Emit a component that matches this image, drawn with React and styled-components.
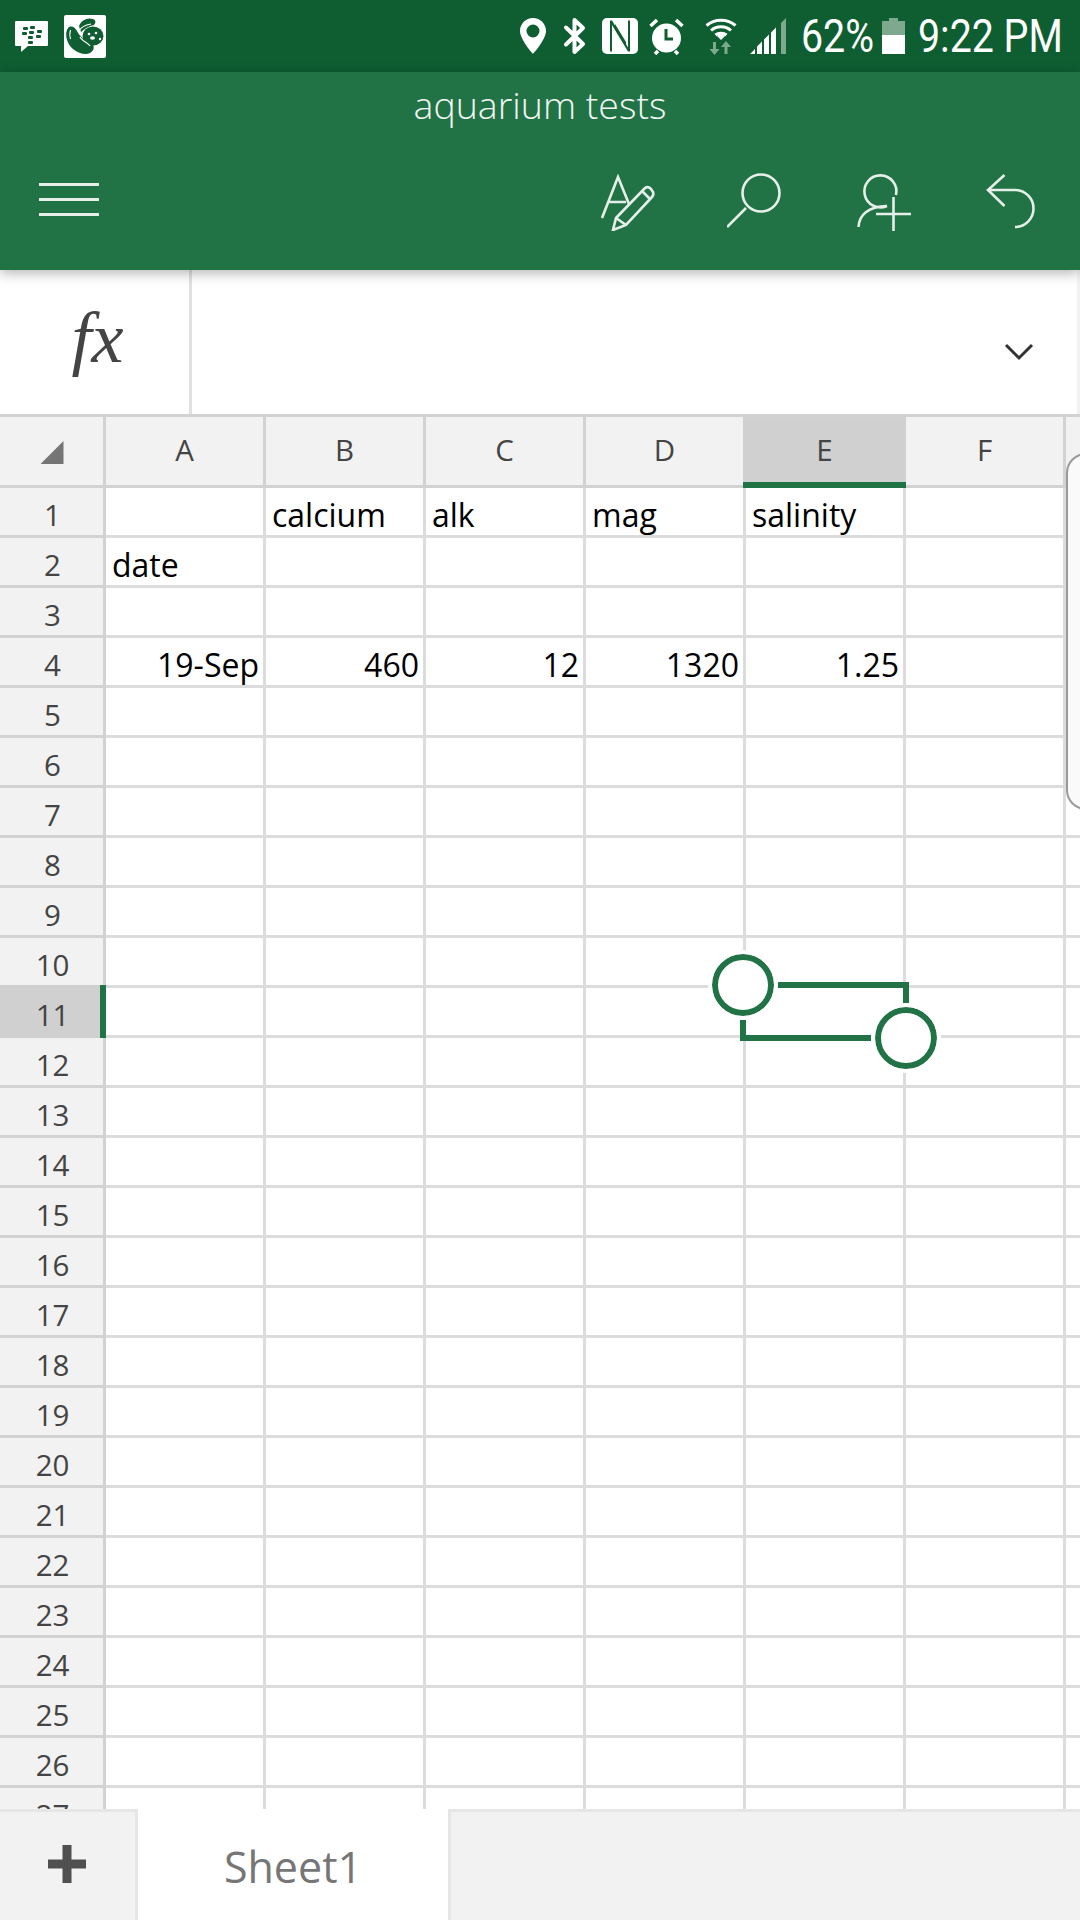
import React from 'react';
import styled, { createGlobalStyle } from 'styled-components';

const GREEN = '#217346';
const STATUS_GREEN = '#0f5e32';
const ICON = '#e6efe9';
const COLUMNS = ['A', 'B', 'C', 'D', 'E', 'F'];
const ROW_COUNT = 27;

const CELLS = {
  '1-B': { text: 'calcium' },
  '1-C': { text: 'alk' },
  '1-D': { text: 'mag' },
  '1-E': { text: 'salinity' },
  '2-A': { text: 'date' },
  '4-A': { text: '19-Sep', right: true },
  '4-B': { text: '460', right: true },
  '4-C': { text: '12', right: true },
  '4-D': { text: '1320', right: true },
  '4-E': { text: '1.25', right: true },
};

const GlobalStyle = createGlobalStyle`
  html, body {
    margin: 0;
    padding: 0;
    background: #fff;
  }
`;

const Screen = styled.div`
  width: 1080px;
  height: 1920px;
  display: flex;
  flex-direction: column;
  overflow: hidden;
  font-family: "Open Sans", "Noto Sans", sans-serif;
`;

const StatusBar = styled.div`
  height: 72px;
  flex: none;
  display: flex;
  align-items: center;
  justify-content: space-between;
  padding: 0 18px 0 15px;
  background: ${STATUS_GREEN};
  color: #fff;
`;

const StatusGroup = styled.div`
  display: flex;
  align-items: center;
`;

const StatusIcon = styled.svg`
  display: block;
  flex: none;
  margin-left: ${(props) => props.$gap || 0}px;
`;

// no condensed face is installed, so the status text is narrowed by hand
const StatusText = styled.span`
  display: block;
  flex: none;
  width: ${(props) => props.$width}px;
  margin-left: ${(props) => props.$gap || 0}px;
  font-family: "Roboto", sans-serif;
  font-size: 46px;
  line-height: 46px;
  white-space: nowrap;
  transform: scaleX(0.855);
  transform-origin: left center;
`;

const AppBar = styled.header`
  height: 198px;
  flex: none;
  position: relative;
  z-index: 2;
  background: ${GREEN};
  color: #fff;
  box-shadow: 0 3px 12px rgba(0, 0, 0, 0.3);
`;

const Title = styled.div`
  height: 64px;
  display: flex;
  align-items: center;
  justify-content: center;
  font-size: 37.5px;
  font-weight: 300;
  color: #f3f7f4;
`;

const Toolbar = styled.div`
  display: flex;
  align-items: center;
  height: 60px;
  margin-top: 35px;
  padding: 0 6px 0 39px;
`;

const Hamburger = styled.div`
  width: 60px;
  height: 33px;
  margin: 0 auto 3px 0;
  display: flex;
  flex-direction: column;
  justify-content: space-between;
  & > span {
    display: block;
    height: 3px;
    background: ${ICON};
  }
`;

const ToolButton = styled.button`
  width: 127px;
  height: 60px;
  padding: 0;
  border: 0;
  background: none;
  display: flex;
  align-items: center;
  justify-content: center;
`;

const FormulaBar = styled.div`
  height: 144px;
  flex: none;
  display: flex;
  background: #fff;
`;

const FxBox = styled.div`
  width: 192px;
  flex: none;
  box-sizing: border-box;
  display: flex;
  align-items: center;
  justify-content: center;
  padding: 0 0 8px 6px;
  border-right: 3px solid #e1e1e1;
  font-family: "Liberation Serif", serif;
  font-style: italic;
  font-size: 72px;
  color: #444;
`;

const FormulaInput = styled.div`
  flex: 1;
  display: flex;
  align-items: center;
  justify-content: flex-end;
  padding: 20px 43px 0 0;
  border-right: 3px solid #f2f2f2;
`;

const Sheet = styled.div`
  flex: 1;
  position: relative;
  overflow: hidden;
  background: #fff;
  border-top: 3px solid #d2d2d2;
`;

const Row = styled.div`
  display: grid;
  grid-template-columns: 106px repeat(6, 160px) 1fr;
  grid-template-rows: minmax(0, 1fr);
  height: ${(props) => (props.$header ? 71 : 50)}px;
`;

const HeadCell = styled.div`
  position: relative;
  box-sizing: border-box;
  display: flex;
  align-items: center;
  justify-content: center;
  padding-bottom: ${(props) => (props.$column ? 2 : 0)}px;
  padding-top: ${(props) => (props.$column ? 0 : 7)}px;
  padding-left: ${(props) => (props.$column ? 0 : 2)}px;
  background: #f2f2f2;
  border-right: 3px solid #d2d2d2;
  border-bottom: 3px solid #d2d2d2;
  color: #444;
  font-size: 29.5px;
  line-height: 34px;
  & > span {
    position: relative;
  }
`;

const SelectedColumnShade = styled.div`
  position: absolute;
  left: -3px;
  right: -3px;
  top: -3px;
  bottom: -3px;
  background: #d0d0d0;
  border-bottom: 6px solid ${GREEN};
`;

const SelectedRowShade = styled.div`
  position: absolute;
  left: 0;
  right: -3px;
  top: -3px;
  bottom: -3px;
  box-sizing: border-box;
  background: #d0d0d0;
  border-right: 6px solid ${GREEN};
`;

const Cell = styled.div`
  box-sizing: border-box;
  display: flex;
  align-items: center;
  justify-content: ${(props) => (props.$right ? 'flex-end' : 'flex-start')};
  padding: 7px 4px 0 ${(props) => (props.$right ? 2 : 6)}px;
  border-right: 3px solid #dcdcdc;
  border-bottom: 3px solid #dcdcdc;
  color: #000;
  font-size: 32px;
  line-height: 38px;
  white-space: nowrap;
`;

const RowEnd = styled.div`
  background: ${(props) => (props.$header ? '#f2f2f2' : '#fff')};
  border-bottom: 3px solid ${(props) => (props.$header ? 'transparent' : '#dcdcdc')};
`;

const CornerMark = styled.div`
  width: 23px;
  height: 23px;
  margin: 5px 0 0 1px;
  background: #757575;
  clip-path: polygon(100% 0, 100% 100%, 0 100%);
`;

const ScrollThumb = styled.div`
  position: absolute;
  left: 1066px;
  top: 36px;
  width: 40px;
  height: 357px;
  box-sizing: border-box;
  background: #fafafa;
  border: 2px solid #999;
  border-radius: 20px;
`;

const SelectionMarks = styled.svg`
  position: absolute;
  left: 700px;
  top: 527px;
`;

const TabBar = styled.footer`
  height: 111px;
  flex: none;
  position: relative;
  z-index: 1;
  display: flex;
  background: #f2f2f2;
`;

const AddTab = styled.div`
  width: 138px;
  flex: none;
  display: flex;
  align-items: center;
  justify-content: center;
  padding: 0 1px 5px 0;
  box-sizing: border-box;
  border-top: 3px solid #e6e6e6;
  border-right: 3px solid #e6e6e6;
`;

const ActiveTab = styled.div`
  width: 313px;
  flex: none;
  box-sizing: border-box;
  display: flex;
  align-items: center;
  justify-content: center;
  background: #fff;
  border-right: 3px solid #e6e6e6;
  color: #767676;
  font-size: 43px;
  padding-top: 4px;
`;

const TabRest = styled.div`
  flex: 1;
  border-top: 3px solid #e6e6e6;
`;

function PinIcon({ gap }) {
  return (
    <StatusIcon $gap={gap} width="26" height="36" viewBox="0 0 26 36">
      <path
        fill="#fff"
        fillRule="evenodd"
        d="M13 0C5.800 0 0 5.800 0 13c0 8.500 13 23 13 23s13-14.500 13-23C26 5.800 20.200 0 13 0zm0 6.500a6.500 6.500 0 1 1 0 13 6.500 6.500 0 0 1 0-13z"
      />
    </StatusIcon>
  );
}

function BluetoothIcon({ gap }) {
  return (
    <StatusIcon $gap={gap} width="24" height="38" viewBox="0 0 24 38">
      <path d="M3 10.500L20 27l-8.500 8V3L20 11 3 27.500" fill="none" stroke="#fff" strokeWidth="4" strokeLinejoin="round" strokeLinecap="round" />
    </StatusIcon>
  );
}

function NfcIcon({ gap }) {
  return (
    <StatusIcon $gap={gap} width="36" height="36" viewBox="0 0 36 36">
      <rect width="36" height="36" rx="5" fill="#fff" />
      <path d="M8 2.500v31h2V7l16 26.500h2V2.500h-2v27L10 2.500z" fill={STATUS_GREEN} />
      <path d="M13 11l11 18V24L13 6z" fill={STATUS_GREEN} />
    </StatusIcon>
  );
}

function AlarmIcon({ gap }) {
  return (
    <StatusIcon $gap={gap} width="35" height="37" viewBox="0 0 35 37">
      <circle cx="17.500" cy="20" r="14.500" fill="#fff" />
      <path d="M17 11v10h7" fill="none" stroke={STATUS_GREEN} strokeWidth="3" />
      <path d="M1.500 8L8 2M33.500 8L27 2M6 36l3-3M29 36l-3-3" stroke="#fff" strokeWidth="3.500" />
    </StatusIcon>
  );
}

function WifiIcon({ gap }) {
  return (
    <StatusIcon $gap={gap} width="32" height="37" viewBox="0 0 32 37">
      <g fill="none" stroke="#fff" strokeWidth="3">
        <path d="M1.500 7.500C9.500 0.500 22.500 0.500 30.500 7.500" />
        <path d="M6 12.500C11.500 7.500 20.500 7.500 26 12.500" />
        <path d="M10.500 17C13.500 14.500 18.500 14.500 21.500 17" />
      </g>
      <path d="M16 22l-4-4c2-2 6-2 8 0z" fill="#fff" />
      <path d="M8 24h3v7h3.500L9.500 37l-5-6H8zM21 23l5 6h-3.500v7h-3v-7H16z" fill="#7fa98f" />
    </StatusIcon>
  );
}

function SignalIcon({ gap }) {
  return (
    <StatusIcon $gap={gap} width="36" height="36" viewBox="0 0 36 36">
      <path d="M0 36l5-5v5zM7 36V28.500l5-5V36zM14 36V21.500l5-5V36zM21 36V14.500l5-5V36z" fill="#fff" />
      <path d="M31 36V5l5-5v36z" fill="#7fa98f" />
    </StatusIcon>
  );
}

function BatteryIcon({ gap }) {
  return (
    <StatusIcon $gap={gap} width="23" height="36" viewBox="0 0 23 36">
      <path d="M0 3h7V0h9v3h7v14H0z" fill="#7fa98f" />
      <rect y="17" width="23" height="19" fill="#fff" />
    </StatusIcon>
  );
}

function BbmIcon() {
  return (
    <StatusIcon width="33" height="31" viewBox="0 0 33 31">
      <path d="M1 0h31a1 1 0 0 1 1 1v23a1 1 0 0 1-1 1H13l-7 6v-6H1a1 1 0 0 1-1-1V1a1 1 0 0 1 1-1z" fill="#fff" />
      <g fill={STATUS_GREEN}>
        <rect x="8" y="6" width="5" height="3" rx="1" />
        <rect x="15" y="5" width="5" height="3" rx="1" />
        <rect x="7" y="11" width="5" height="3" rx="1" />
        <rect x="14" y="10" width="5" height="3" rx="1" />
        <rect x="22" y="9" width="5" height="3" rx="1" />
        <rect x="13" y="15" width="5" height="3" rx="1" />
        <rect x="21" y="14" width="5" height="3" rx="1" />
        <rect x="13" y="20" width="5" height="3" rx="1" />
      </g>
    </StatusIcon>
  );
}

function BeanIcon({ gap }) {
  return (
    <StatusIcon $gap={gap} width="42" height="43" viewBox="0 0 42 43">
      <rect width="42" height="43" rx="2" fill="#fff" />
      <g fill={STATUS_GREEN}>
        <path d="M15 11c2-6 9-9 14-7 3 1 3 4 1 6-5 1-10 4-13 7z" />
        <ellipse cx="29" cy="21" rx="10.500" ry="9.500" />
        <path d="M4 13c3-3 7-1 9 3 3 6 9 10 15 13 3 2 2 7-2 9-4 2-11 1-17-4C3 29 0 19 4 13z" />
      </g>
      <path d="M6.500 15c-1 3-1 6 0 9" fill="none" stroke="#fff" strokeWidth="1.200" />
      <path d="M15 16c2-4 6-6 12-7M26 31c-2-3-8-5-10-9" fill="none" stroke="#fff" strokeWidth="1.200" />
      <g fill="#fff">
        <circle cx="25" cy="19" r="1.300" />
        <circle cx="32" cy="18" r="1.300" />
        <ellipse cx="28.500" cy="23" rx="2.500" ry="1.800" />
        <circle cx="36" cy="24" r="1.200" />
      </g>
    </StatusIcon>
  );
}

const toolStroke = { fill: 'none', stroke: ICON, strokeWidth: 2.6 };

function EditIcon() {
  return (
    <svg width="60" height="60" viewBox="2 0 60 60" {...toolStroke}>
      <path d="M4 47L20 6l11 27M11 31h17" />
      <path d="M15 59l3-12 29-30q3-2 6 1l2 3q1 3-1 5L28 54zM18 47l10 7M44 20l8 8" />
    </svg>
  );
}

function SearchIcon() {
  return (
    <svg width="60" height="60" viewBox="4 0 60 60" {...toolStroke}>
      <circle cx="38" cy="22" r="18.500" />
      <path d="M23 37L4 56" />
    </svg>
  );
}

function AddPersonIcon() {
  return (
    <svg width="60" height="60" viewBox="0 0 60 60" {...toolStroke}>
      <path d="M42 24A16 16 0 1 0 33 35M4.500 56C5 44 14 35.500 33 35M22 43h35M39.500 26v34" />
    </svg>
  );
}

function UndoIcon() {
  return (
    <svg width="60" height="60" viewBox="0 0 60 60" {...toolStroke}>
      <path d="M23.500 4L7 19l16.500 16M7 19h27a18.500 18.500 0 0 1 0 37" />
    </svg>
  );
}

function ColumnHeaders() {
  return (
    <Row $header>
      <HeadCell $column>
        <CornerMark />
      </HeadCell>
      {COLUMNS.map((name) => (
        <HeadCell $column key={name}>
          {name === 'E' && <SelectedColumnShade />}
          <span>{name}</span>
        </HeadCell>
      ))}
      <RowEnd $header />
    </Row>
  );
}

function SheetRow({ number }) {
  return (
    <Row>
      <HeadCell>
        {number === 11 && <SelectedRowShade />}
        <span>{number}</span>
      </HeadCell>
      {COLUMNS.map((name) => {
        const cell = CELLS[`${number}-${name}`];
        return (
          <Cell key={name} $right={cell && cell.right}>
            {cell && cell.text}
          </Cell>
        );
      })}
      <RowEnd />
    </Row>
  );
}

function Selection() {
  return (
    <SelectionMarks width="250" height="150" viewBox="700 944 250 150">
      <g fill="none" stroke={GREEN} strokeWidth="6">
        <path d="M778 985h128v18" />
        <path d="M743 1020v18h128" />
      </g>
      <circle cx="743" cy="985" r="28" fill="#fff" stroke={GREEN} strokeWidth="6" />
      <circle cx="743" cy="985" r="33" fill="none" stroke="#fff" strokeWidth="4" />
      <circle cx="906" cy="1038" r="28" fill="#fff" stroke={GREEN} strokeWidth="6" />
      <circle cx="906" cy="1038" r="33" fill="none" stroke="#fff" strokeWidth="4" />
    </SelectionMarks>
  );
}

export default function App() {
  const rows = Array.from({ length: ROW_COUNT }, (_, i) => i + 1);

  return (
    <Screen>
      <GlobalStyle />
      <StatusBar>
        <StatusGroup>
          <BbmIcon />
          <BeanIcon gap={16} />
        </StatusGroup>
        <StatusGroup>
          <PinIcon />
          <BluetoothIcon gap={17} />
          <NfcIcon gap={15} />
          <AlarmIcon gap={11} />
          <WifiIcon gap={21} />
          <SignalIcon gap={13} />
          <StatusText $gap={15} $width={71}>62%</StatusText>
          <BatteryIcon gap={10} />
          <StatusText $gap={13} $width={144}>9:22 PM</StatusText>
        </StatusGroup>
      </StatusBar>

      <AppBar>
        <Title>aquarium tests</Title>
        <Toolbar>
          <Hamburger>
            <span />
            <span />
            <span />
          </Hamburger>
          <ToolButton><EditIcon /></ToolButton>
          <ToolButton><SearchIcon /></ToolButton>
          <ToolButton><AddPersonIcon /></ToolButton>
          <ToolButton><UndoIcon /></ToolButton>
        </Toolbar>
      </AppBar>

      <FormulaBar>
        <FxBox>fx</FxBox>
        <FormulaInput>
          <svg width="30" height="18" viewBox="0 0 30 18">
            <path d="M2 2l13 13L28 2" fill="none" stroke="#333" strokeWidth="3" />
          </svg>
        </FormulaInput>
      </FormulaBar>

      <Sheet>
        <ColumnHeaders />
        {rows.map((number) => (
          <SheetRow key={number} number={number} />
        ))}
        <Selection />
        <ScrollThumb />
      </Sheet>

      <TabBar>
        <AddTab>
          <svg width="38" height="38" viewBox="0 0 38 38">
            <path d="M19 0v38M0 19h38" stroke="#505050" strokeWidth="9" />
          </svg>
        </AddTab>
        <ActiveTab>Sheet1</ActiveTab>
        <TabRest />
      </TabBar>
    </Screen>
  );
}
